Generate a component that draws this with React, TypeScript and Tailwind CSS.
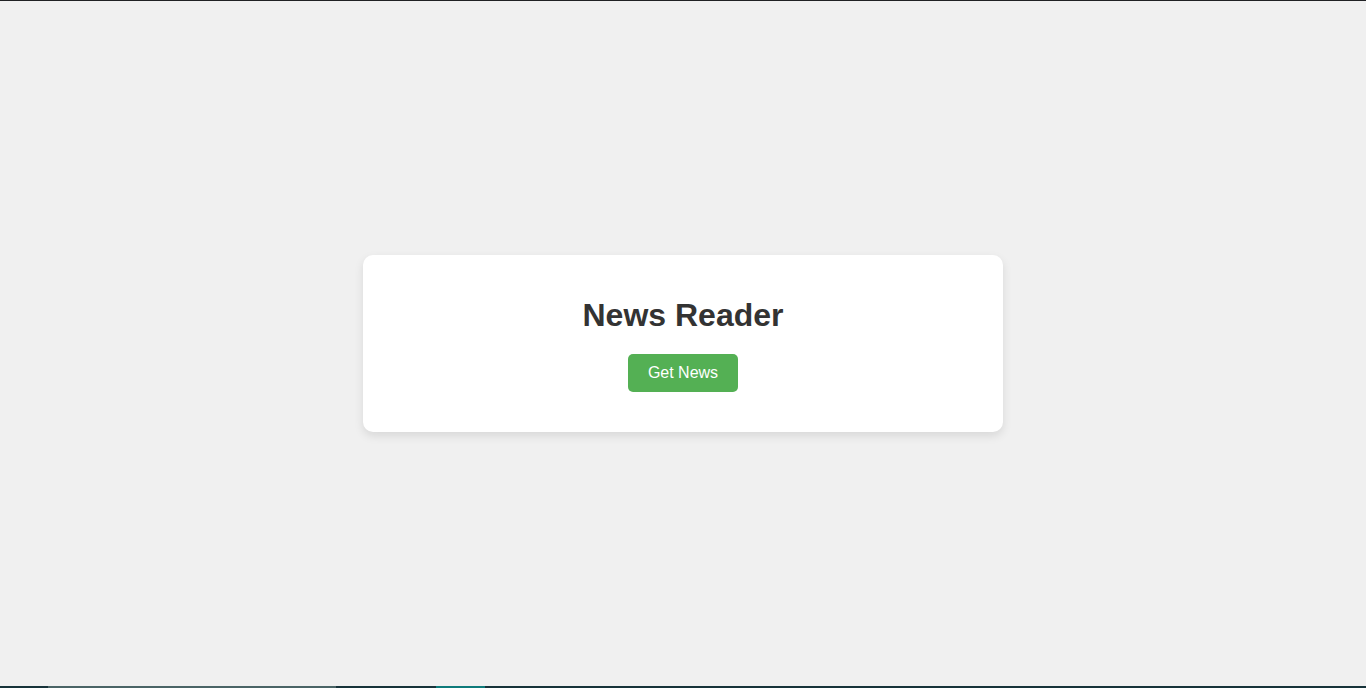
const App = () => {
  return (
    <div
      className="flex h-[688px] w-full flex-col bg-[#f0f0f0]"
      style={{ fontFamily: '"Liberation Sans", Arial, sans-serif' }}
    >
      <div className="h-px w-full bg-[#202124]" />

      <main className="flex flex-1 items-center justify-center">
        <div className="flex w-[640px] flex-col items-center rounded-[10px] bg-white px-10 py-10 shadow-[0_4px_10px_rgba(0,0,0,0.1)]">
          <h1 className="mb-[19px] text-[32px] font-bold leading-[40px] text-[#333333]">News Reader</h1>
          <button className="h-[38px] rounded-[5px] bg-[#54b054] px-5 text-base text-white">
            Get News
          </button>
        </div>
      </main>

      {/* bottom strip */}
      <div className="flex h-[2px] w-full bg-[#17333a]">
        <div className="w-12" />
        <div className="w-[288px] bg-[#4a6466]" />
        <div className="w-[100px]" />
        <div className="w-[49px] bg-[#0e7a7a]" />
      </div>
    </div>
  );
};

export default App;
